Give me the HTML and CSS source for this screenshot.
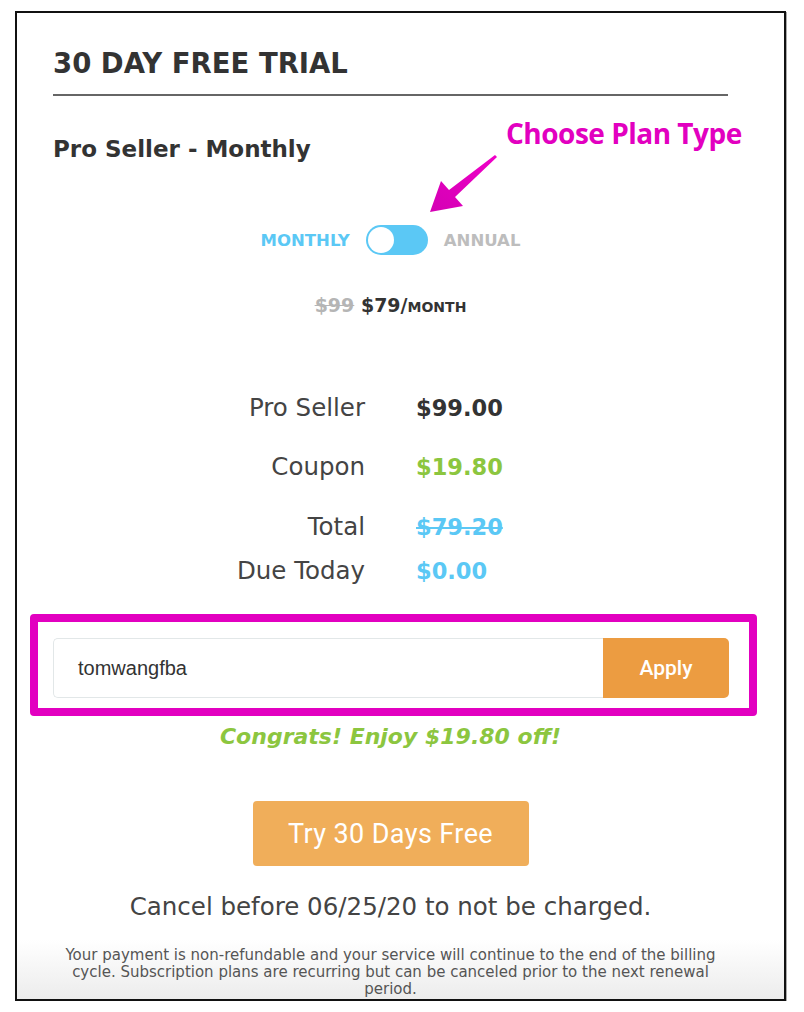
FILE: index.html
```html
<!DOCTYPE html>
<html>
<head>
<meta charset="utf-8">
<link rel="stylesheet" href="styles.css">
</head>
<body>
<div class="frame">
  <div class="content">
    <h1 class="title">30 DAY FREE TRIAL</h1>
    <h2 class="plan">Pro Seller - Monthly</h2>
    <div class="annot">Choose Plan Type</div>
    <svg class="arrow" width="80" height="70" viewBox="425 150 80 70">
      <defs>
        <linearGradient id="ag" x1="0" y1="1" x2="1" y2="0">
          <stop offset="0" stop-color="#d400b4"/>
          <stop offset="1" stop-color="#f000c8"/>
        </linearGradient>
      </defs>
      <polygon fill="url(#ag)" points="430,212 441,181 449,190 495,155 497,157 455,197 463,206"/>
    </svg>
    <div class="toggle-row">
      <span class="opt active">MONTHLY</span>
      <span class="switch"><span class="knob"></span></span>
      <span class="opt">ANNUAL</span>
    </div>
    <div class="price">
      <span class="old">$99</span> <span class="new">$79/<span class="per">MONTH</span></span>
    </div>
    <div class="summary">
      <div class="row r1"><span class="lbl">Pro Seller</span><span class="val dark">$99.00</span></div>
      <div class="row r2"><span class="lbl">Coupon</span><span class="val green">$19.80</span></div>
      <div class="row r3"><span class="lbl">Total</span><span class="val blue strike">$79.20</span></div>
      <div class="row r4"><span class="lbl">Due Today</span><span class="val blue">$0.00</span></div>
    </div>
    <div class="highlight">
      <div class="coupon">
        <div class="coupon-input">tomwangfba</div>
        <div class="apply">Apply</div>
      </div>
    </div>
    <div class="congrats">Congrats! Enjoy $19.80 off!</div>
    <div class="cta-wrap"><div class="cta">Try 30 Days Free</div></div>
    <div class="cancel">Cancel before 06/25/20 to not be charged.</div>
    <div class="fine">Your payment is non-refundable and your service will continue to the end of the billing cycle. Subscription plans are recurring but can be canceled prior to the next renewal period.</div>
  </div>
</div>
</body>
</html>
```

FILE: styles.css
```css
html, body {
  margin: 0;
  padding: 0;
  background: #ffffff;
}
body {
  padding: 11px 0 0 15px;
  font-family: "DejaVu Sans", sans-serif;
}
.frame {
  width: 771px;
  height: 990px;
  box-sizing: border-box;
  border: 2px solid #111;
  background: linear-gradient(to bottom, #ffffff 0%, #ffffff 94%, #ececec 100%);
  box-shadow: 1px 1px 0 #aaa;
}
.content {
  position: relative;
  padding: 30px 56px 0 36px;
}
.title {
  margin: 0;
  font-size: 27.5px;
  line-height: 40px;
  font-weight: bold;
  color: #333;
  padding-bottom: 11px;
  border-bottom: 2px solid #666;
}
.plan {
  margin: 38px 0 0 0;
  font-size: 23px;
  line-height: 30px;
  font-weight: bold;
  color: #333;
}
.annot {
  position: absolute;
  left: 489px;
  top: 103px;
  font-family: "Open Sans", sans-serif;
  font-weight: bold;
  font-size: 28px;
  line-height: 34px;
  color: #e200c0;
  letter-spacing: -0.5px;
}
.arrow {
  position: absolute;
  left: 408px;
  top: 137px;
}
.toggle-row {
  margin-top: 61px;
  height: 30px;
  display: flex;
  justify-content: center;
  align-items: center;
  gap: 16px;
}
.opt {
  font-size: 16.5px;
  font-weight: bold;
  color: #bdbdbd;
}
.opt.active {
  color: #5bc8f5;
}
.switch {
  width: 62px;
  height: 30px;
  border-radius: 15px;
  background: #5bc8f5;
  display: flex;
  align-items: center;
  padding-left: 2px;
  box-sizing: border-box;
}
.knob {
  width: 26px;
  height: 26px;
  border-radius: 50%;
  background: #fff;
}
.price {
  margin-top: 35px;
  line-height: 30px;
  text-align: center;
  font-size: 19px;
  font-weight: bold;
  color: #333;
}
.old {
  color: #b5b5b5;
  text-decoration: line-through;
}
.per {
  font-size: 14px;
}
.summary {
  margin-top: 71px;
  display: flex;
  flex-direction: column;
}
.row {
  display: grid;
  grid-template-columns: 312px 1fr;
  column-gap: 51px;
  line-height: 30px;
}
.r2 { margin-top: 29px; }
.r3 { margin-top: 30px; }
.r4 { margin-top: 14px; }
.lbl {
  text-align: right;
  color: #444;
  font-size: 24.5px;
}
.val {
  font-weight: bold;
  font-size: 22.5px;
}
.dark { color: #333; }
.green { color: #8cc63f; }
.blue { color: #5bc8f5; }
.strike { text-decoration: line-through; }
.highlight {
  margin: 28px -29px 0 -23px;
  border: 8px solid #e200c0;
  border-radius: 4px;
  padding: 16px 20px 10px 15px;
}
.coupon {
  display: flex;
  height: 60px;
}
.coupon-input {
  flex: 1;
  border: 1px solid #e2e7e8;
  border-right: none;
  border-radius: 5px 0 0 5px;
  display: flex;
  align-items: center;
  padding-left: 24px;
  font-family: "Liberation Sans", sans-serif;
  font-size: 20px;
  color: #333;
}
.apply {
  width: 126px;
  background: #ec9c41;
  border-radius: 0 5px 5px 0;
  color: #fff;
  font-family: "Roboto", sans-serif;
  font-weight: 500;
  font-size: 21px;
  display: flex;
  align-items: center;
  justify-content: center;
}
.congrats {
  margin-top: 6px;
  line-height: 30px;
  text-align: center;
  font-size: 22px;
  font-weight: bold;
  font-style: italic;
  color: #8cc63f;
}
.cta-wrap {
  margin-top: 49px;
  display: flex;
  justify-content: center;
}
.cta {
  width: 276px;
  height: 65px;
  background: #f0ae5a;
  border-radius: 4px;
  color: #fff;
  font-family: "Roboto", sans-serif;
  font-size: 27px;
  letter-spacing: 0.4px;
  display: flex;
  align-items: center;
  justify-content: center;
}
.cancel {
  margin-top: 26px;
  line-height: 30px;
  text-align: center;
  font-size: 24.5px;
  color: #444;
}
.fine {
  margin: 25px 0 0 0;
  line-height: 17px;
  text-align: center;
  font-size: 15px;
  color: #555;
}
```
